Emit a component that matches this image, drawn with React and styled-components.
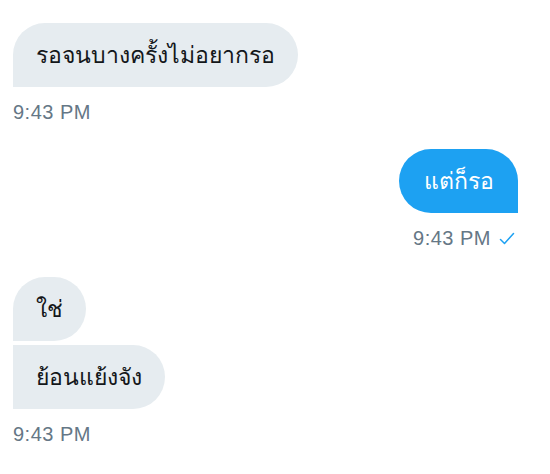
import React from "react";
import styled, { createGlobalStyle } from "styled-components";

const Global = createGlobalStyle`
  html, body { margin: 0; padding: 0; background: #ffffff; }
  body { font-family: "Liberation Sans", "Noto Sans", sans-serif; }
`;

const Thread = styled.div`
  display: flex;
  flex-direction: column;
  padding: 23px 32px 0 13px;
  width: 550px;
  box-sizing: border-box;
`;

const Group = styled.div`
  display: flex;
  flex-direction: column;
  align-items: ${(p) => (p.$mine ? "flex-end" : "flex-start")};
  gap: 4px;
  margin-bottom: ${(p) => p.$after}px;
`;

const Bubble = styled.div`
  box-sizing: border-box;
  height: 64px;
  display: flex;
  align-items: center;
  padding: 0 ${(p) => (p.$mine ? 24 : 23)}px 0 ${(p) => (p.$mine ? 25 : 23)}px;
  font-size: 23px;
  font-family: "Liberation Sans", "Noto Sans", sans-serif;
  color: ${(p) => (p.$mine ? "#ffffff" : "#14171a")};
  background: ${(p) => (p.$mine ? "#1da1f2" : "#e6ecf0")};
  border-radius: ${(p) => p.$radius};
`;

const Stamp = styled.div`
  display: flex;
  align-items: center;
  gap: 8px;
  margin-top: 10px;
  font-size: 20px;
  letter-spacing: 0.5px;
  color: #657786;
  padding-right: ${(p) => (p.$mine ? 3 : 0)}px;
`;

const Check = () => (
  <svg width="16" height="14" viewBox="0 0 16 14" fill="none">
    <path d="M1.5 7.5 L5.5 11.5 L14.5 1.5" stroke="#1da1f2" strokeWidth="1.5" strokeLinecap="round" strokeLinejoin="round" />
  </svg>
);

export default function App() {
  return (
    <>
      <Global />
      <Thread>
        <Group $after={25}>
          <Bubble $radius="32px 32px 32px 0">รอจนบางครั้งไม่อยากรอ</Bubble>
          <Stamp>9:43 PM</Stamp>
        </Group>
        <Group $mine $after={27}>
          <Bubble $mine $radius="32px 32px 0 32px">แต่ก็รอ</Bubble>
          <Stamp $mine>
            9:43 PM
            <Check />
          </Stamp>
        </Group>
        <Group $after={0}>
          <Bubble $radius="32px 32px 32px 0">ใช่</Bubble>
          <Bubble $radius="0 32px 32px 0">ย้อนแย้งจัง</Bubble>
          <Stamp>9:43 PM</Stamp>
        </Group>
      </Thread>
    </>
  );
}
